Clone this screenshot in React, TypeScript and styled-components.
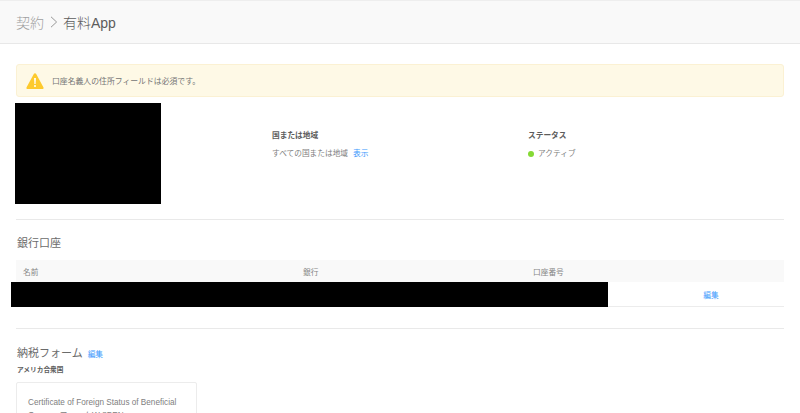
import React from "react";
import styled, { createGlobalStyle } from "styled-components";

const Global = createGlobalStyle`
  html, body { margin: 0; padding: 0; background: #fff; overflow: hidden; height: 413px; }
  body { font-family: "Liberation Sans", "Noto Sans CJK JP", sans-serif; color: #666; }
  * { box-sizing: border-box; }
`;

const Page = styled.div`
  width: 800px;
  height: 413px;
  overflow: hidden;
`;

const Header = styled.header`
  height: 44px;
  background: #f9f9f9;
  border-top: 1px solid #eeeeee;
  border-bottom: 1px solid #e8e8e8;
  padding: 0 16px;
  display: flex;
  align-items: center;
  font-size: 14px;
  font-weight: 300;
`;

const Crumb = styled.span`
  color: #a0a0a0;
`;

const Current = styled.span`
  color: #5c5c5c;
`;

const Chevron = styled.svg`
  width: 8px;
  height: 12px;
  margin: 0 5px 0 6px;
`;

const Main = styled.main`
  padding: 20px 16px 0;
`;

const Alert = styled.div`
  height: 33px;
  background: #fef9e6;
  border: 1px solid #fbf1d3;
  border-radius: 3px;
  display: flex;
  align-items: center;
  padding-left: 9px;
  gap: 8px;
  font-size: 7.85px;
  color: #757575;
`;

const Overview = styled.section`
  position: relative;
  height: 123px;
  display: grid;
  grid-template-columns: 256px 256px 1fr;
  padding-top: 33px;
  border-bottom: 1px solid #e9e9e9;
`;

const Redaction = styled.div<{ $variant: "logo" | "row" }>`
  position: absolute;
  background: #000;
  ${(p) =>
    p.$variant === "logo"
      ? "left: -1px; top: 6px; width: 146px; height: 101px;"
      : "left: -5px; top: 0; width: 597px; height: 25px;"}
`;

const InfoColumn = styled.div<{ $start: number }>`
  grid-column: ${(p) => p.$start};
  font-size: 7.7px;
`;

const InfoTitle = styled.div`
  font-weight: 700;
  color: #5c5c5c;
  line-height: 11px;
  margin-bottom: 7px;
`;

const InfoValue = styled.div`
  display: flex;
  align-items: center;
  line-height: 11px;
  color: #808080;
`;

const Link = styled.a`
  color: #3b99fc;
  font-size: 7.7px;
`;

const ShowLink = styled(Link)`
  margin-left: 5px;
`;

const Dot = styled.span`
  width: 6px;
  height: 6px;
  border-radius: 50%;
  background: #85d934;
  margin-right: 4px;
`;

const SectionTitle = styled.h2`
  margin: 0;
  padding-left: 1px;
  font-size: 11px;
  font-weight: 400;
  color: #6b6b6b;
  line-height: 16px;
`;

const BankSection = styled.section`
  padding-top: 15px;
  height: 109px;
  border-bottom: 1px solid #e9e9e9;
`;

const Table = styled.div`
  margin-top: 9px;
`;

const HeadRow = styled.div`
  height: 22px;
  display: grid;
  grid-template-columns: 280px 230px 1fr;
  align-items: center;
  background: #f9f9f9;
  color: #858585;
  font-size: 7.7px;
  padding-left: 7px;
`;

const BodyRow = styled.div`
  position: relative;
  height: 25px;
  display: flex;
  align-items: center;
  justify-content: flex-end;
  border-bottom: 1px solid #ececec;
`;

const EditCell = styled.div`
  width: 146px;
  text-align: center;
  line-height: 11px;
`;

const TaxSection = styled.section`
  padding-top: 16px;
`;

const TaxHeading = styled.div`
  display: flex;
  align-items: center;
  gap: 5px;
`;

const Country = styled.div`
  font-size: 6.7px;
  font-weight: 700;
  color: #5c5c5c;
  line-height: 10px;
  margin-top: 4px;
  padding-left: 1px;
`;

const FormCard = styled.div`
  width: 181px;
  height: 80px;
  margin-top: 7px;
  border: 1px solid #ececec;
  border-radius: 2px;
  padding: 14px 11px;
  font-size: 8.2px;
  line-height: 12.5px;
  color: #808080;
`;

export default function App() {
  return (
    <Page>
      <Global />
      <Header>
        <Crumb>契約</Crumb>
        <Chevron viewBox="0 0 8 12" fill="none" stroke="#8c8c8c" strokeWidth="0.9">
          <path d="M1 .8 6.6 6 1 11.2" />
        </Chevron>
        <Current>有料App</Current>
      </Header>
      <Main>
        <Alert>
          <svg width="18" height="18" viewBox="0 0 18 18">
            <path
              d="M9 1.2c.5 0 .9.3 1.2.8l7.2 13.2c.5.9 0 1.8-1 1.8H1.6c-1 0-1.5-.9-1-1.8L7.8 2c.3-.5.7-.8 1.2-.8z"
              fill="#fdca2e"
            />
            <path d="M8.1 6h1.8l-.3 6H8.4z" fill="#fff" />
            <circle cx="9" cy="14.1" r="1" fill="#fff" />
          </svg>
          <span>口座名義人の住所フィールドは必須です。</span>
        </Alert>
        <Overview>
          <Redaction $variant="logo" />
          <InfoColumn $start={2}>
            <InfoTitle>国または地域</InfoTitle>
            <InfoValue>
              すべての国または地域
              <ShowLink>表示</ShowLink>
            </InfoValue>
          </InfoColumn>
          <InfoColumn $start={3}>
            <InfoTitle>ステータス</InfoTitle>
            <InfoValue>
              <Dot />
              アクティブ
            </InfoValue>
          </InfoColumn>
        </Overview>
        <BankSection>
          <SectionTitle>銀行口座</SectionTitle>
          <Table>
            <HeadRow>
              <span>名前</span>
              <span>銀行</span>
              <span>口座番号</span>
            </HeadRow>
            <BodyRow>
              <Redaction $variant="row" />
              <EditCell>
                <Link>編集</Link>
              </EditCell>
            </BodyRow>
          </Table>
        </BankSection>
        <TaxSection>
          <TaxHeading>
            <SectionTitle>納税フォーム</SectionTitle>
            <Link>編集</Link>
          </TaxHeading>
          <Country>アメリカ合衆国</Country>
          <FormCard>Certificate of Foreign Status of Beneficial Owner - フォームW-8BEN</FormCard>
        </TaxSection>
      </Main>
    </Page>
  );
}
